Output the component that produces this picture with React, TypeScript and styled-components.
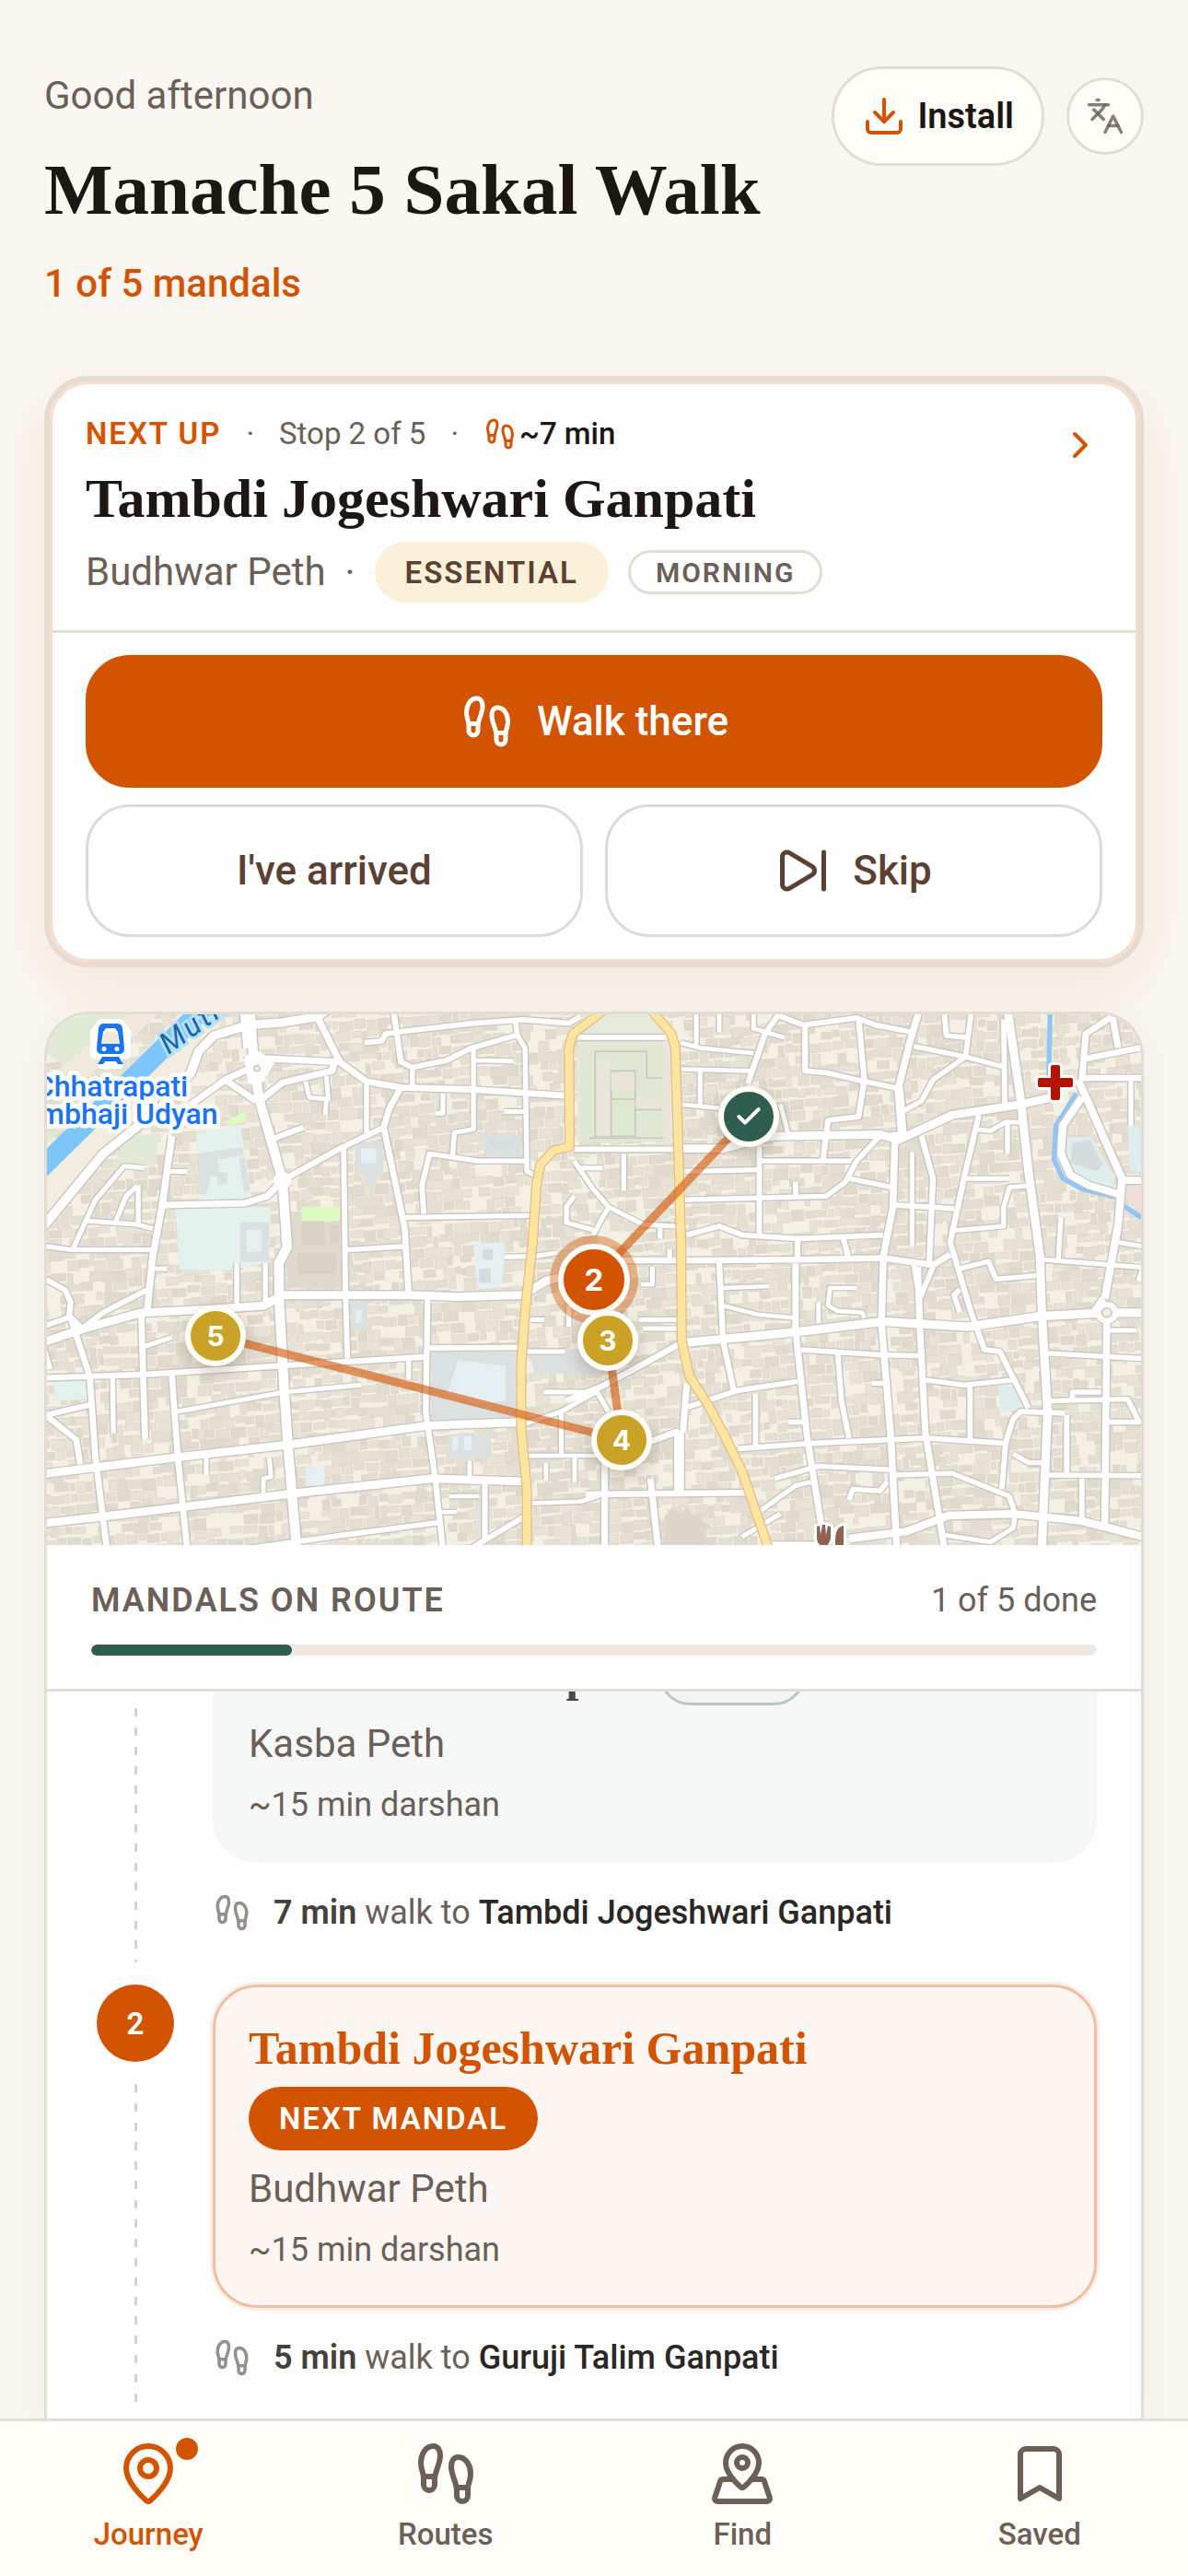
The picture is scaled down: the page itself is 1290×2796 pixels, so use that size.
import React, { useLayoutEffect, useRef } from "react";
import styled, { createGlobalStyle, css } from "styled-components";
import {
  Bookmark,
  Check,
  ChevronRight,
  Download,
  Footprints,
  Languages,
  MapPin,
  MapPinned,
  SkipForward,
} from "lucide-react";

const color = {
  page: "#faf7f2",
  surface: "#fffdf8",
  card: "#fffefe",
  ink: "#1c1712",
  text: "#6b5f57",
  brown: "#5c4033",
  accent: "#d35400",
  green: "#2f5d50",
  gold: "#c9a227",
  line: "#e3ddd3",
};

const sans = `Roboto, "Liberation Sans", sans-serif`;
const serif = `"Liberation Serif", serif`;

const GlobalStyle = createGlobalStyle`
  *, *::before, *::after { box-sizing: border-box; }
  body {
    margin: 0;
    background: ${color.page};
    color: ${color.text};
    font-family: ${sans};
    font-size: 42px;
  }
  h1, h2, h3, p, ol { margin: 0; padding: 0; }
  button { font: inherit; color: inherit; cursor: pointer; }
  svg { display: block; flex: none; }
`;

const Shell = styled.div`
  display: flex;
  flex-direction: column;
  height: 100vh;
  overflow: hidden;
`;

const Main = styled.main`
  display: flex;
  flex: 1;
  flex-direction: column;
  gap: 48px;
  min-height: 0;
  padding: 72px 48px 0;
`;

const Header = styled.header`
  display: flex;
  align-items: flex-start;
  justify-content: space-between;
  padding-bottom: 21px;
`;

const Greeting = styled.p`
  line-height: 63px;
`;

const PageTitle = styled.h1`
  margin: 24px 0;
  color: ${color.ink};
  font: 700 79px/93px ${serif};
`;

const Tally = styled.p`
  color: ${color.accent};
  font-weight: 500;
  line-height: 63px;
`;

const HeaderActions = styled.div`
  display: flex;
  align-items: center;
  gap: 24px;
`;

const InstallButton = styled.button`
  display: flex;
  align-items: center;
  gap: 12px;
  height: 108px;
  padding: 0 30px;
  border: 3px solid #e2ded6;
  border-radius: 54px;
  background: ${color.surface};
  color: ${color.ink};
  font-size: 38px;
  font-weight: 600;

  svg { color: ${color.accent}; }
`;

const RoundButton = styled.button`
  display: grid;
  place-items: center;
  width: 84px;
  height: 84px;
  padding: 0;
  border: 3px solid #e2ded6;
  border-radius: 50%;
  background: ${color.surface};
  color: rgba(107, 95, 87, 0.8);
`;

const NextCard = styled.section`
  padding: 3px;
  border: 6px solid #e7dcd0;
  border-radius: 48px;
  background: ${color.card};
  box-shadow: inset 0 0 0 3px #fadccd, 0 24px 72px rgba(211, 84, 0, 0.1);
`;

const NextHead = styled.div`
  display: flex;
  justify-content: space-between;
  padding: 30px 36px;
  border-bottom: 3px solid #e3dfd5;
`;

const NextInfo = styled.div`
  display: flex;
  flex-direction: column;
  gap: 6px;
`;

const NextArrow = styled(ChevronRight)`
  margin-top: 12px;
  color: ${color.accent};
`;

const MetaRow = styled.div`
  display: flex;
  align-items: center;
  gap: 27px;
  font-size: 33px;
  line-height: 48px;
`;

const Eyebrow = styled.span`
  color: ${color.accent};
  font-weight: 600;
  letter-spacing: 2px;
`;

const Eta = styled.span`
  display: flex;
  align-items: center;
  gap: 3px;
  color: ${color.ink};
  font-weight: 500;

  svg { color: ${color.accent}; }
`;

const NextTitle = styled.h2`
  color: ${color.ink};
  font: 700 60px/81px ${serif};
`;

const PlaceRow = styled.div`
  display: flex;
  align-items: center;
  gap: 21px;
`;

const Place = styled.span`
  line-height: 60px;
`;

const badgeTones = {
  gold: css`
    height: 66px;
    border: 0;
    background: #faf1d8;
    color: ${color.brown};
  `,
  plain: css`
    height: 48px;
    padding: 0 27px;
    border: 3px solid ${color.line};
    color: ${color.text};
    font-size: 30px;
  `,
  accent: css`
    height: 69px;
    border: 0;
    background: ${color.accent};
    color: #fff;
  `,
  done: css`
    height: 66px;
    border: 3px solid #b8c9c3;
    background: #f1f6f5;
    color: ${color.green};
    font-size: 30px;
  `,
};

const Badge = styled.span<{ $tone: keyof typeof badgeTones }>`
  display: inline-flex;
  align-items: center;
  padding: 0 33px;
  border-radius: 36px;
  font-size: 33px;
  font-weight: 600;
  letter-spacing: 2px;
  white-space: nowrap;
  ${(p) => badgeTones[p.$tone]}
`;

const Actions = styled.div`
  display: grid;
  grid-template-columns: 1fr 1fr;
  gap: 18px 24px;
  padding: 24px 36px;
`;

const ActionButton = styled.button<{ $primary?: boolean }>`
  display: flex;
  align-items: center;
  justify-content: center;
  gap: 24px;
  height: 144px;
  border: 3px solid ${(p) => (p.$primary ? color.accent : "#dcdbd9")};
  border-radius: 48px;
  background: ${(p) => (p.$primary ? color.accent : "transparent")};
  color: ${(p) => (p.$primary ? "#fff" : color.brown)};
  font-size: 44px;
  font-weight: 500;
  ${(p) => p.$primary && "grid-column: 1 / -1;"}
`;

const RouteCard = styled.section`
  display: flex;
  flex: 1;
  flex-direction: column;
  min-height: 0;
  overflow: hidden;
  border: 3px solid ${color.line};
  border-bottom: 0;
  border-radius: 48px 48px 0 0;
  background: ${color.card};
  box-shadow: 0 12px 48px rgba(92, 64, 51, 0.06);
`;

const MapBox = styled.div`
  position: relative;
  flex: none;
  aspect-ratio: 1188 / 576;
  overflow: hidden;
  background: #f5f1e4;
`;

const MapArt = styled.svg`
  width: 100%;
  height: 100%;
`;

const Pin = styled.button<{ $x: number; $y: number; $kind: "done" | "next" | "later" }>`
  position: absolute;
  left: ${(p) => (p.$x / 1188) * 100}%;
  top: ${(p) => (p.$y / 576) * 100}%;
  display: grid;
  place-items: center;
  width: ${(p) => (p.$kind === "next" ? 78 : 66)}px;
  height: ${(p) => (p.$kind === "next" ? 78 : 66)}px;
  padding: 0;
  border: 6px solid #fffdf8;
  border-radius: 50%;
  transform: translate(-50%, -50%);
  background: ${(p) => ({ done: color.green, next: color.accent, later: color.gold })[p.$kind]};
  box-shadow: ${(p) =>
    p.$kind === "next" ? "0 0 0 9px rgba(211, 84, 0, 0.4)" : "0 6px 18px rgba(60, 40, 20, 0.25)"};
  color: #fff;
  font-family: Inter, sans-serif;
  font-size: ${(p) => (p.$kind === "next" ? 33 : 30)}px;
  font-weight: 700;
`;

const RouteHead = styled.div`
  padding: 36px 48px;
  border-bottom: 3px solid #e5ded4;
`;

const RouteTitleRow = styled.div`
  display: flex;
  justify-content: space-between;
  margin-bottom: 24px;
  font-size: 36px;
  line-height: 48px;
`;

const RouteTitle = styled.h2`
  font-size: 36px;
  font-weight: 600;
  letter-spacing: 2px;
`;

const Track = styled.div`
  height: 12px;
  overflow: hidden;
  border-radius: 6px;
  background: #eeeae2;
`;

const Fill = styled.div`
  height: 100%;
  border-radius: 6px;
  background: ${color.green};
`;

const StopList = styled.ol`
  flex: 1;
  min-height: 0;
  padding: 36px 48px 48px;
  overflow-y: auto;
  list-style: none;
  scrollbar-width: none;
`;

const StopItem = styled.li`
  display: grid;
  grid-template-columns: 96px 1fr;
  gap: 36px;
`;

const Rail = styled.div`
  display: flex;
  flex-direction: column;
  align-items: center;
`;

const StopNumber = styled.span<{ $done?: boolean }>`
  display: grid;
  flex: none;
  place-items: center;
  width: 84px;
  height: 84px;
  border-radius: 50%;
  background: ${(p) => (p.$done ? color.green : color.accent)};
  color: #fff;
  font-size: 33px;
  font-weight: 600;
`;

const Dashes = styled.span`
  flex: 1;
  width: 3px;
  margin: 24px 0;
  background: repeating-linear-gradient(to bottom, #d5d2cf 0 9px, transparent 9px 21px);
`;

const StopCard = styled.article<{ $done?: boolean }>`
  display: flex;
  flex-direction: column;
  align-items: flex-start;
  gap: 12px;
  padding: 36px;
  border: 3px solid ${(p) => (p.$done ? "#f6f8f8" : "#efbf9f")};
  border-radius: 48px;
  background: ${(p) => (p.$done ? "#f6f8f8" : "#fcf6f2")};
  ${(p) => !p.$done && "box-shadow: 0 0 0 3px #fbeee8;"}
`;

const StopTitleRow = styled.div`
  display: flex;
  flex-wrap: wrap;
  align-items: center;
  gap: 18px;
`;

const StopTitle = styled.h3<{ $done?: boolean }>`
  color: ${(p) => (p.$done ? "#4b4845" : color.accent)};
  font: 700 50px/60px ${serif};
`;

const Darshan = styled.p`
  font-size: 36px;
  line-height: 48px;
`;

const Leg = styled.p`
  display: flex;
  align-items: center;
  gap: 24px;
  padding: 24px 0 48px;
  font-size: 36px;
  line-height: 60px;

  svg { color: #94908b; }
  b { color: #44403c; font-weight: 600; }
  strong { color: #2a2724; font-weight: 500; }
`;

const Nav = styled.nav`
  display: grid;
  flex: none;
  grid-template-columns: repeat(4, 1fr);
  padding: 21px 0 24px;
  border-top: 3px solid #e1dfdb;
  background: ${color.surface};
`;

const NavLink = styled.a<{ $active?: boolean }>`
  display: flex;
  flex-direction: column;
  align-items: center;
  gap: 9px;
  color: ${(p) => (p.$active ? color.accent : color.text)};
  font-size: 33px;
  font-weight: 500;
  line-height: 42px;
  text-decoration: none;
`;

const NavIcon = styled.span`
  position: relative;
`;

const NavDot = styled.span`
  position: absolute;
  top: -3px;
  right: -18px;
  width: 24px;
  height: 24px;
  border-radius: 50%;
  background: ${color.accent};
`;

/* Map artwork. The street survey comes in two sheets, each with its own grid. */

type Street = [d: string, width: number];

const westSheet = "translate(-51 -21) scale(0.4146 0.3831)";
const eastSheet = "translate(589 -21) scale(0.4146 0.3831)";

const westStreets: Street[] = [
  ["M655 40L665 200L680 300L740 525L752 715L730 760L732 880L745 1130L755 1290L777 1570M640 40L650 150M740 525L745 545", 25],
  ["M110 660L270 450L420 320L500 220L520 160L560 115L650 85L740 78L830 62L860 40", 24],
  ["M500 310L590 240L660 205M590 240L670 300M640 190L700 180M680 300L740 248L870 215L875 190", 18],
  ["M700 180L890 190L960 245L1050 262L1240 268L1480 285M830 60L890 190", 18],
  ["M800 245L810 290L855 295L852 340M855 230L860 300", 12],
  ["M1030 40L1050 190L1080 205L1170 185L1235 150L1350 115M1040 105L1240 80L1370 70L1490 80L1520 60M955 135L1000 130L1010 110L1040 105", 15],
  ["M1350 70L1355 115L1375 150L1380 500L1400 510M1240 150L1240 380L1190 390L1185 460M1240 185L1345 187M1080 205L1080 262M960 245L960 390M1160 280V335L1140 335M1320 330H1375", 13],
  ["M740 525L890 435L1005 375L1020 320L1050 262M720 405L795 375M1005 375L1060 660L1070 850", 16],
  ["M900 430L905 850L910 1030M910 722L1060 712M1060 630L1390 625M1110 620L1105 540L1125 450L1250 470L1380 470", 14],
  ["M425 595L640 590L700 570L740 525M450 400L425 595L400 740L385 900", 18],
  ["M440 500H490M400 775H438M120 712L190 722L400 722M190 722L250 580L325 485L378 490M300 650L330 570L360 540M362 540V655M230 640L360 650L400 662", 13],
  ["M110 800L170 835L185 870L180 920M110 940L185 912L215 945L270 900L385 835", 15],
  ["M110 985L220 945L370 900L560 890L690 880L740 850L1070 850L1200 855L1370 850L1430 810L1500 790", 23],
  ["M185 915L235 1080L250 1310L280 1570M370 900L380 1260M110 1085L380 1075L740 1050L1120 1025M110 985L130 1060", 16],
  ["M380 995L450 970M620 760V890M695 760V870M295 1085L297 1240M465 1180L745 1125L945 1105M1070 1030V1090", 13],
  ["M450 1075L465 1300L490 1570M120 1190L240 1160M125 1195L200 1260L210 1330", 16],
  ["M110 1357L460 1310L750 1275L1120 1220L1370 1210M110 1497L290 1475L480 1450L770 1412L1130 1370L1370 1378", 23],
  ["M640 1570L900 1530L1145 1495M1120 860L1115 1180L1140 1370L1160 1570M1120 1000L1370 998M1230 1570L1370 1480M1270 1380V1540", 15],
  ["M1175 1420H1255M1145 1465H1195M1230 1320V1370M540 1310V1360M705 1310L710 1365L690 1370V1415M1390 1440L1520 1435L1568 1420M1375 1305H1568M1470 1180V1305M1430 1325V1375M1505 1310V1380", 12],
  ["M1320 742L1400 740L1460 730M1380 1010H1480M1390 920H1425M1375 1215L1470 1180L1568 1120M1425 1125H1530M1490 880V940", 13],
];

const eastStreets: Street[] = [
  ["M-60 752H240L545 750L770 745L900 765L945 735", 17],
  ["M240 435H350L480 400L760 395L810 410L950 340L1130 310L1230 285M810 260L820 400L790 400", 23],
  ["M865 40L840 130L810 260L820 400M800 410L795 600L770 740L765 930L790 1260L805 1570", 18],
  ["M250 985L540 955L770 925L990 940L1180 910L1350 900L1450 900", 24],
  ["M1095 40L1130 300L1150 500L1180 740L1185 900L1200 1180L1185 1570", 22],
  ["M540 760V950L570 1250L610 1520M860 770L865 930L880 1240L930 1570", 17],
  ["M340 755L350 980L380 1130M250 1170L390 1120L545 1095M390 1285L580 1270L880 1255L1090 1270L1110 1200L1130 1180L1245 1185", 15],
  ["M1020 340L985 500L945 700L1000 900L1035 1005L1075 1010L1150 1170M870 400L900 520L890 760", 15],
  ["M845 445V710M240 135L290 150L430 165M240 210L425 215M280 50V140M340 50V105M290 210V315M240 310L340 320M430 55V95L510 120M500 310L520 390", 12],
  ["M505 40L460 110L415 250M500 60L560 85L700 65L750 85L845 105M565 90V215L620 220L700 240L810 265M705 65L720 240L705 345L625 355L612 465", 15],
  ["M1000 50L985 175L850 145M985 175L1090 205M985 175L900 240L870 300L820 330M930 55L935 115L985 120M1085 70L1088 320", 14],
  ["M250 500L440 495M445 430V680M445 470H685M760 400L700 470L670 530L620 570L250 580M680 520L795 545M540 530V570", 14],
  ["M255 680L340 655L400 680L545 690L770 680M545 690V750M665 690L680 750M795 595L955 605", 15],
  ["M985 520H1100M1150 540L1100 545L1085 600V655L945 668M1010 380L1050 385L1090 360H1130M1095 365V450", 13],
  ["M1290 240L1300 110L1370 60L1385 150M1300 180L1450 148M1290 235H1450", 17],
  ["M1418 240V370M1235 630L1228 750M1380 700L1450 712M1190 750L1370 765L1450 772L1438 810M1360 950H1430", 13],
  ["M1280 240L1395 520L1385 650L1350 860M1290 290L1240 370L1235 450L1260 510L1310 540L1390 565M1395 525H1450", 20],
  ["M1355 920L1350 1500M1320 900L1345 860", 18],
  ["M350 880L440 905L540 915M350 830L470 825M700 830H630L625 880L650 895L715 900L720 915M600 870V930M165 770V820H135", 12],
  ["M970 775L1045 755L1065 805L1170 795M970 835L955 850L970 900M850 765L865 860L900 770", 14],
  ["M555 1005L770 1020L870 1022M650 1010L660 1150L680 1255M875 1090L980 1105L1115 1090M997 1105V1265M435 1130V1280M740 1100H770M520 1210H560", 14],
  ["M1200 1015L1450 1030M1205 1150L1410 1145L1440 1210H1360M1265 1150V1125H1340M1250 1190V1360M1200 1360L1450 1362M1290 1370V1500", 14],
  ["M485 1370L600 1335L790 1345L800 1360L950 1355L1100 1420L1115 1470M1090 1270L1080 1400M1110 1300L1150 1325H1190M680 1430L690 1400L760 1405L780 1380", 14],
  ["M680 1540L830 1520L940 1475L1110 1470L1290 1490L1450 1535", 22],
  ["M450 1460L540 1390L580 1380M400 1535L500 1470M930 1530L1050 1550L1110 1510L1115 1470M480 1555H600", 13],
  ["M250 980L150 1040L30 1110L-60 1150M160 1265L235 1235M255 1100L245 1240M-10 1415L410 1410M40 1300V1570M160 1370L180 1570", 17],
  ["M235 1235V1405", 26],
  ["M-40 470L10 550L50 600L140 650L225 655M50 600L10 680M185 660V690M210 720V755M90 450V555M-30 490H35M130 920H235M140 945H235M20 1125L50 1180", 13],
  ["M-30 120H200M-40 437H240", 15],
  ["M-40 570L-60 600V645L10 665", 13],
];

const westAvenue =
  "M1585 40L1500 110L1490 150L1492 430L1450 440L1415 480L1405 540L1395 700L1375 900L1365 1050L1365 1230L1380 1400L1380 1570";
const eastAvenue =
  "M160 40L215 110L225 150L240 700L242 980L262 1080L310 1160L350 1240L400 1350L470 1570";

const Streets = ({ streets, casing }: { streets: Street[]; casing?: boolean }) => (
  <>
    {streets.map(([d, width]) => (
      <path key={d} d={d} stroke={casing ? "#cac7c2" : "#ffffff"} strokeWidth={casing ? width + 7 : width} />
    ))}
  </>
);

const makeBuildings = () => {
  let seed = 17;
  const random = () => {
    seed = (seed * 16807) % 2147483647;
    return seed / 2147483647;
  };
  const shades: [string, string, string] = ["", "", ""];
  for (let y = -60; y < 660; y += 12) {
    let x = -60;
    while (x < 1250) {
      const w = 5 + Math.floor(random() * 12);
      const h = 7 + Math.floor(random() * 6);
      const drop = Math.floor(random() * 3);
      if (random() > 0.14) {
        shades[Math.floor(random() * 3)] += `M${x} ${y + drop}h${w}v${h}h${-w}z`;
      }
      x += w + 1 + Math.floor(random() * 2);
    }
  }
  return shades;
};

const buildings = makeBuildings();

const CityMap = () => (
  <MapArt viewBox="0 0 1188 576" preserveAspectRatio="xMidYMid slice" role="img" aria-label="Route map">
    <rect width="1188" height="576" fill="#f4f0e3" />
    <g transform="rotate(-4 594 288)" stroke="#d8d3c6" strokeWidth="1" strokeOpacity="0.5">
      <path d={buildings[0]} fill="#e4dfd2" />
      <path d={buildings[1]} fill="#e8e3d5" />
      <path d={buildings[2]} fill="#e0dbcd" />
    </g>

    <g transform={westSheet}>
      <path d="M100 40H350L180 210L100 150ZM100 385H160L100 440Z" fill="#e0ead5" />
      <path d="M100 640L480 230L520 180L600 40H480L100 480Z" fill="#f3eddf" />
      <path d="M330 395L415 395L405 485L300 478Z" fill="#e0ead5" />
      <path d="M350 40H430L190 270L130 230Z" fill="#f1eadc" />
      <path d="M80 520L540 30" stroke="#7cc6fb" strokeWidth="54" />
      <path d="M515 390L630 370L660 575L525 580ZM460 605L710 600L705 758L600 780L470 778ZM140 1095L225 1090L230 1145L145 1150Z" fill="#e4f2ed" />
      <path d="M515 450L635 430V455L570 465L572 500L595 505V535L570 538V515L552 512L540 565L525 565ZM625 465L640 460L655 555L640 558ZM628 645H705V755H628ZM930 415H1005V510H985L980 545H965L960 510L930 505ZM1260 390L1365 400V460L1270 455ZM920 870H962V950H920ZM1130 1005H1350V1195L1130 1205ZM1385 1015L1568 1000V1075L1400 1070ZM1170 1245H1285V1310L1170 1315Z" fill="#dbe0e0" />
      <path d="M645 665H685V728H645ZM945 435H985V478H945ZM932 893H948V928H932ZM1200 1035L1325 1050V1150L1250 1160L1170 1130ZM1240 705L1320 700V780L1310 830H1250ZM800 1340L850 1335V1385L800 1390ZM1185 1250H1200V1290H1185ZM1215 1250H1235V1290H1215Z" fill="#e5eff1" />
      <path d="M1265 720H1290V750H1265ZM1255 775H1285V815H1255ZM1285 410H1345V430H1285Z" fill="#d6dcdd" />
      <path d="M790 600H890V640H790ZM585 362L640 330L645 355L610 370Z" fill="#ddfac2" />
      <path d="M760 645H892L896 830H750Z" fill="#dfdacd" />
      <path d="M790 640H850V710H790ZM865 650H888V700H865ZM780 730H880V790H780Z" fill="#d8d3c6" />
      <path d="M1515 45H1690L1760 130V415H1510Z" fill="#e8e7da" />
    </g>
    <g transform={eastSheet}>
      <path d="M-20 50H160L195 110H-20Z" fill="#e6eadb" />
      <path d="M-25 140H190V415H-25Z" fill="#dfe8d3" />
      <path d="M15 160H150V235H190M15 160V400H120V215H57V295H118M57 295V400M118 325H190M0 405H195" stroke="#c9c8bb" strokeWidth="4" fill="none" />
      <path d="M57 220H118V270H57ZM20 180H52V400H20ZM122 290H190V320H122Z" fill="#ebe6dc" />
      <path d="M1245 405L1315 400L1375 520L1370 555L1300 530L1255 490ZM1410 370H1450V500H1415ZM1070 1105H1120L1140 1175L1075 1180Z" fill="#e0edef" />
      <path d="M1265 420L1310 410L1345 480L1330 500L1260 475Z" fill="#d6dcdd" />
      <path d="M1400 560L1450 520V620Z" fill="#f3dfda" />
      <path d="M195 1480L215 1455L240 1470L255 1450L270 1475L295 1465L292 1490L320 1505L300 1525L315 1550L280 1570H200L190 1540L205 1515Z" fill="#dcd7ca" />
      <path d="M1207 40L1203 230M1275 280L1222 370L1217 465L1240 520L1290 550L1375 572M1400 597L1450 635" stroke="#92c5f7" strokeWidth="13" fill="none" />
    </g>

    <g fill="none" strokeLinejoin="round" strokeLinecap="butt">
      <g transform={westSheet}><Streets streets={westStreets} casing /></g>
      <g transform={eastSheet}>
        <Streets streets={eastStreets} casing />
        <circle cx="1355" cy="900" r="34" fill="#cac7c2" />
      </g>
      <g transform={westSheet}>
        <Streets streets={westStreets} />
        <path d="M640 180L665 150L720 190L680 260L650 250Z" fill="#fff" />
        <circle cx="740" cy="525" r="24" fill="#fff" />
        <circle cx="673" cy="208" r="8" fill="#f2eee2" stroke="#cac7c2" strokeWidth="4" />
      </g>
      <g transform={eastSheet}>
        <Streets streets={eastStreets} />
        <circle cx="1355" cy="900" r="31" fill="#fff" />
        <circle cx="1355" cy="900" r="13" fill="#f2eee2" stroke="#cac7c2" strokeWidth="4" />
      </g>
      <g transform={westSheet}><path d={westAvenue} stroke="#e9b98c" strokeWidth="27" /></g>
      <g transform={eastSheet}><path d={eastAvenue} stroke="#e9b98c" strokeWidth="27" /></g>
      <g transform={westSheet}><path d={westAvenue} stroke="#fce59f" strokeWidth="21" /></g>
      <g transform={eastSheet}><path d={eastAvenue} stroke="#fce59f" strokeWidth="21" /></g>
    </g>

    <polyline
      points="762,111 594,288 609,354 624,462 183,349"
      fill="none"
      stroke={color.accent}
      strokeOpacity="0.6"
      strokeWidth="9"
      strokeLinejoin="round"
    />

    <text
      transform="translate(132 44) rotate(-36)"
      fill="#1767a8"
      stroke="#b5dffb"
      strokeWidth="6"
      paintOrder="stroke"
      fontFamily={sans}
      fontSize="32"
      fontStyle="italic"
      letterSpacing="3"
    >
      Mutha
    </text>
    <path d="M60 12h18l6 8v22H54V20zM56 52h26" fill="none" stroke="#fff" strokeWidth="14" strokeLinejoin="round" />
    <path
      fill="#1a73f0"
      fillRule="evenodd"
      d="M62 10h14q5 0 6 5l2 22q0 6-6 6H60q-6 0-6-6l2-22q1-5 6-5zM64 15l-3 4-2 13h20l-2-13-3-4zM62 35a2 2 0 1 0 0 5a2 2 0 1 0 0-5zM76 35a2 2 0 1 0 0 5a2 2 0 1 0 0-5zM60 46h18l5 8h-6l-2-3H63l-2 3h-6z"
    />
    <g
      fill="#1a73f0"
      stroke="#fff"
      strokeWidth="9"
      strokeLinejoin="round"
      paintOrder="stroke"
      textAnchor="middle"
      fontFamily={sans}
      fontSize="32"
      fontWeight="500"
    >
      <text x="70" y="89">Chhatrapati</text>
      <text x="70" y="119">Sambhaji Udyan</text>
    </g>
    <g stroke="#fff" strokeWidth="6" paintOrder="stroke" strokeLinejoin="round">
      <path d="M1092 55h6q2 0 2 2v12h12q2 0 2 2v6q0 2-2 2h-12v12q0 2-2 2h-6q-2 0-2-2V79h-12q-2 0-2-2v-6q0-2 2-2h12V57q0-2 2-2z" fill="#b51200" />
      <path d="M836 556l3-1 1 10 2-11h3l1 11 2-10 3 1v13q-2 6-4 8h-6q-5-3-5-9zM865 555q-9 1-9 16v8h9z" fill="#8d6350" />
    </g>
  </MapArt>
);

const pins = [
  { label: "5", x: 183, y: 349, kind: "later" },
  { label: "4", x: 624, y: 462, kind: "later" },
  { label: "2", x: 594, y: 288, kind: "next" },
  { label: "3", x: 609, y: 354, kind: "later" },
  { label: "1", x: 762, y: 111, kind: "done" },
] as const;

const stops = [
  {
    number: 1,
    name: "Shri Kasba Ganpati",
    place: "Kasba Peth",
    darshan: "~15 min darshan",
    done: true,
    walk: "7 min",
    to: "Tambdi Jogeshwari Ganpati",
  },
  {
    number: 2,
    name: "Tambdi Jogeshwari Ganpati",
    place: "Budhwar Peth",
    darshan: "~15 min darshan",
    done: false,
    walk: "5 min",
    to: "Guruji Talim Ganpati",
  },
];

const tabs = [
  { label: "Journey", Icon: MapPin, active: true },
  { label: "Routes", Icon: Footprints, active: false },
  { label: "Find", Icon: MapPinned, active: false },
  { label: "Saved", Icon: Bookmark, active: false },
];

const visited = 1;
const total = 5;

export default function App() {
  const listRef = useRef<HTMLOListElement>(null);

  // Bring the next stop into view: the visited one is mostly scrolled away.
  useLayoutEffect(() => {
    if (listRef.current) listRef.current.scrollTop = 126;
  }, []);

  return (
    <Shell>
      <GlobalStyle />
      <Main>
        <Header>
          <div>
            <Greeting>Good afternoon</Greeting>
            <PageTitle>Manache 5 Sakal Walk</PageTitle>
            <Tally>1 of 5 mandals</Tally>
          </div>
          <HeaderActions>
            <InstallButton type="button">
              <Download size={48} />
              Install
            </InstallButton>
            <RoundButton type="button" aria-label="Change language">
              <Languages size={42} />
            </RoundButton>
          </HeaderActions>
        </Header>

        <NextCard>
          <NextHead>
            <NextInfo>
              <MetaRow>
                <Eyebrow>NEXT UP</Eyebrow>
                <span>·</span>
                <span>Stop 2 of 5</span>
                <span>·</span>
                <Eta>
                  <Footprints size={36} />
                  ~7 min
                </Eta>
              </MetaRow>
              <NextTitle>Tambdi Jogeshwari Ganpati</NextTitle>
              <PlaceRow>
                <Place>Budhwar Peth</Place>
                <span>·</span>
                <Badge $tone="gold">ESSENTIAL</Badge>
                <Badge $tone="plain">MORNING</Badge>
              </PlaceRow>
            </NextInfo>
            <NextArrow size={48} />
          </NextHead>
          <Actions>
            <ActionButton type="button" $primary>
              <Footprints size={60} />
              Walk there
            </ActionButton>
            <ActionButton type="button">I've arrived</ActionButton>
            <ActionButton type="button">
              <SkipForward size={60} />
              Skip
            </ActionButton>
          </Actions>
        </NextCard>

        <RouteCard>
          <MapBox>
            <CityMap />
            {pins.map((pin) => (
              <Pin key={pin.label} type="button" $x={pin.x} $y={pin.y} $kind={pin.kind} aria-label={`Stop ${pin.label}`}>
                {pin.kind === "done" ? <Check size={32} strokeWidth={3} /> : pin.label}
              </Pin>
            ))}
          </MapBox>
          <RouteHead>
            <RouteTitleRow>
              <RouteTitle>MANDALS ON ROUTE</RouteTitle>
              <span>1 of 5 done</span>
            </RouteTitleRow>
            <Track role="progressbar" aria-label="Mandals done" aria-valuenow={visited} aria-valuemax={total}>
              <Fill style={{ width: `${(visited / total) * 100}%` }} />
            </Track>
          </RouteHead>
          <StopList ref={listRef}>
            {stops.map((stop) => (
              <StopItem key={stop.number}>
                <Rail>
                  <StopNumber $done={stop.done}>{stop.number}</StopNumber>
                  <Dashes />
                </Rail>
                <div>
                  <StopCard $done={stop.done}>
                    {stop.done ? (
                      <StopTitleRow>
                        <StopTitle $done>{stop.name}</StopTitle>
                        <Badge $tone="done">DONE</Badge>
                      </StopTitleRow>
                    ) : (
                      <>
                        <StopTitle>{stop.name}</StopTitle>
                        <Badge $tone="accent">NEXT MANDAL</Badge>
                      </>
                    )}
                    <Place>{stop.place}</Place>
                    <Darshan>{stop.darshan}</Darshan>
                  </StopCard>
                  <Leg>
                    <Footprints size={42} />
                    <span>
                      <b>{stop.walk}</b> walk to <strong>{stop.to}</strong>
                    </span>
                  </Leg>
                </div>
              </StopItem>
            ))}
          </StopList>
        </RouteCard>
      </Main>

      <Nav>
        {tabs.map(({ label, Icon, active }) => (
          <NavLink key={label} href={`#${label.toLowerCase()}`} $active={active}>
            <NavIcon>
              <Icon size={72} />
              {active && <NavDot />}
            </NavIcon>
            {label}
          </NavLink>
        ))}
      </Nav>
    </Shell>
  );
}
